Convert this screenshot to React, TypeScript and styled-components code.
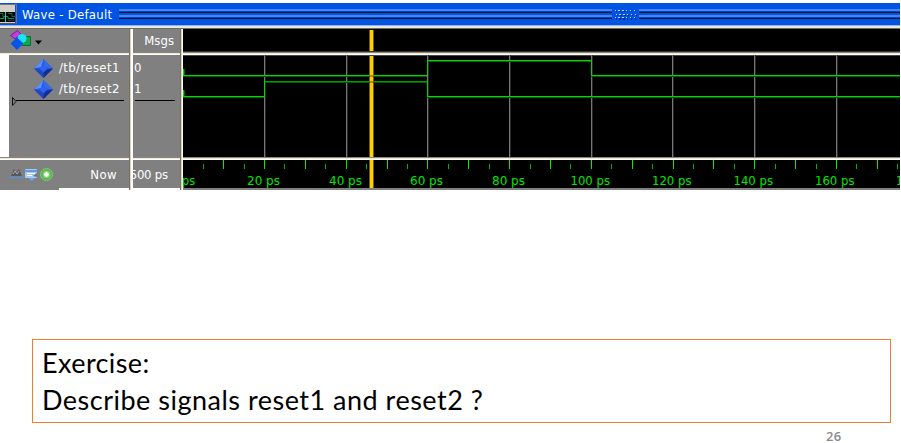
import React from "react";
import styled, { createGlobalStyle } from "styled-components";

const GlobalStyle = createGlobalStyle`
  * { box-sizing: border-box; }
  body { margin: 0; background: #fff; overflow: hidden; }
`;

const Slide = styled.main`
  width: 901px;
  height: 443px;
  padding-top: 3px;
  background: #fff;
  display: flex;
  flex-direction: column;
  overflow: hidden;
`;

const WaveWindow = styled.section`
  width: 900px;
  height: 187px;
  display: flex;
  flex-direction: column;
  font: 13px/16px "DejaVu Sans Condensed", "DejaVu Sans", sans-serif;
  font-stretch: condensed;
  color: #fff;
`;

const TitleBar = styled.header`
  height: 22px;
  display: flex;
  background: #0054e3;
`;

const TitleText = styled.h1`
  margin: 0;
  padding: 4px 0 0 5px;
  width: 101px;
  font: inherit;
  letter-spacing: 0.28px;
  white-space: nowrap;
`;

const TitleEdge = styled.div`
  height: 4px;
  background: linear-gradient(#8fb2ec 0 1px, #ece9d8 1px 3px, #6c6a60 3px);
`;

const Columns = styled.div`
  display: flex;
  height: 161px;
`;

const Column = styled.div<{ $width: number }>`
  width: ${(p) => p.$width}px;
  flex: none;
  display: flex;
  flex-direction: column;
  overflow: hidden;
`;

const Splitter = styled.div<{ $width: number }>`
  width: ${(p) => p.$width}px;
  height: 161px;
  flex: none;
  background: linear-gradient(90deg, #77725f 0 1px, #d8d3c3 1px 2px, #fff 2px);
`;

const Rule = styled.div`
  height: 3px;
  flex: none;
  background: linear-gradient(#8b867a 0 1px, #ece9d8 1px 2px, #fff 2px);
`;

const HeaderCell = styled.div`
  height: 23px;
  flex: none;
  display: flex;
  background: #808080;
`;

const MsgsHeader = styled(HeaderCell)`
  padding: 4px 6px 0 0;
  justify-content: flex-end;
`;

const NamesBody = styled.div`
  height: 102px;
  flex: none;
  border-left: 9px solid #fff;
  background: #808080;
`;

const SignalRow = styled.div`
  height: 21px;
  display: flex;
  padding-left: 25px;
  gap: 6px;
  white-space: nowrap;
  line-height: 26px;
  letter-spacing: 0.38px;
  svg { flex: none; margin-top: 4px; }
`;

const MsgsBody = styled.div`
  height: 102px;
  flex: none;
  padding-left: 1px;
  background: #808080;
  line-height: 26px;
`;

const Value = styled.div`
  height: 21px;
`;

const EndLine = styled.div`
  width: 40px;
  height: 1px;
  margin: 3px 0 0 1px;
  background: #000;
`;

const NowCell = styled.div`
  height: 31px;
  flex: none;
  display: flex;
  justify-content: space-between;
  padding: 7px 12px 0 9px;
  letter-spacing: 0.4px;
  background: linear-gradient(#fff, #fff) 59px 28px / 80px 3px no-repeat #808080;
  svg { margin-top: -1px; }
`;

const NowValue = styled.div`
  height: 28px;
  flex: none;
  display: flex;
  justify-content: flex-end;
  padding: 7px 12px 0 0;
  background: #808080;
  white-space: nowrap;
  letter-spacing: -0.2px;
`;

const Chart = styled.svg`
  display: block;
  flex: none;
`;

const TimeLabel = styled.text`
  fill: #00e600;
  font-size: 12px;
`;

const Exercise = styled.section`
  width: 859px;
  height: 85px;
  margin: 149px 0 0 32px;
  padding: 4px 9px;
  border: 1px solid #ed7d31;
  color: #000;
  font: 27px/37px Lato, sans-serif;
`;

const Line = styled.p<{ $spacing: number }>`
  margin: 0;
  letter-spacing: ${(p) => p.$spacing}px;
  white-space: nowrap;
`;

const PageNumber = styled.footer`
  margin: 5px 0 0 826px;
  color: #8b8b8b;
  font: 600 13px/16px "Open Sans", sans-serif;
  letter-spacing: 0.4px;
`;

const WindowIcon = () => (
  <svg width="17" height="22">
    <path d="M0 1.5H16.5V21" fill="none" stroke="#777" />
    <path d="M0 2h15v19H0z" fill="#d4d0c8" />
    <path d="M0 9h15v10H0z" fill="#000" />
    <path d="M0 10.500h3v3h3M8 10.500h4v3h3" fill="none" stroke="#087b36" />
    <path d="M0 15.500h4v-2h4v2h6" fill="none" stroke="#00a344" />
    <path d="M5.500 9v10" stroke="#36c6cf" />
    <path d="M8 17.500h6" stroke="#3b168c" />
    <path d="M0 20.500h16.500" stroke="#555" />
  </svg>
);

const dots = [
  [9.5, 614.5],
  [13.5, 615.5],
  [17, 614.5],
].flatMap(([y, x]) => [0, 1, 2, 3, 4, 5].map((i) => ({ y: y - 3, x: x - 118 + i * 3.8 })));

const Grip = () => (
  <svg width="782" height="22" shapeRendering="crispEdges">
    {[1, 521].map((start, i) =>
      [6, 12].map((y) => (
        <g key={`${i}${y}`}>
          <rect x={start} y={y} width={i ? 261 : 493} height="2" fill="#4886ee" />
          <rect x={start} y={y + 2} width={i ? 261 : 493} height="1" fill="#0348c2" />
          <rect x={start} y={y + 3} width={i ? 261 : 493} height="1" fill="#001238" />
        </g>
      ))
    )}
    {dots.map((d, i) => (
      <g key={i}>
        <rect x={d.x + 1} y={d.y + 1} width="1.500" height="1.500" fill="#002a7c" />
        <rect x={d.x} y={d.y} width="1.400" height="1.400" fill="#b9d6ff" />
      </g>
    ))}
  </svg>
);

const ShapesIcon = () => (
  <svg width="46" height="23">
    <path d="M22 7.500h8.500v9H22z" fill="#16a34a" stroke="#087332" />
    <path d="M10.500 6.500 17.500 1.500 21 5 15 10z" fill="#c43be0" stroke="#7c1a98" />
    <circle cx="22" cy="9.500" r="4.600" fill="#16e6f4" />
    <path d="M17 8.500 23.500 14.500 17 21 10.500 14.500z" fill="#0754ea" />
    <path d="M35 11.500h7l-3.500 4z" fill="#000" />
  </svg>
);

const Diamond = () => (
  <svg width="19" height="19">
    <path d="M9.500 0 19 9.500 9.500 19 0 9.500z" fill="#2457dd" />
    <path d="M9.500 0 0 9.500 7 8z" fill="#5a91fa" />
    <path d="M9.500 0 19 9.500 10 8z" fill="#356be9" />
    <path d="M0 9.500 9.500 19V11z" fill="#2147c0" />
    <path d="M19 9.500 9.500 19V11z" fill="#142e8c" />
    <path d="M9.500 5.500 13.500 9.500 9.500 13.500 5.500 9.500z" fill="#2c61f2" />
  </svg>
);

const EndMarker = () => (
  <Chart width="120" height="9">
    <path d="M3.500.5v8L7 4.500z" fill="#808080" stroke="#111" />
    <path d="M7 3.500h108" stroke="#000" />
  </Chart>
);

const NowIcons = () => (
  <svg width="46" height="18">
    <path d="M2 10 5 3l2 3 3-3 3 7z" fill="#55595d" />
    <path d="M4 8 6 5l2 3 2-3" fill="none" stroke="#a9aaac" />
    <path d="M2 11.500h11M3 10l-1.500 1.500L3 13M12 10l1.500 1.500L12 13" fill="none" stroke="#4e91df" />
    <rect x="16" y="3" width="12" height="9" rx="1" fill="#a9c9f5" />
    <path d="M16 4h12v2H16z" fill="#629bea" />
    <path d="M18 7.500h8M18 9.500h5" stroke="#fff" />
    <path d="M19 12h7l-3 3z" fill="#69a6f2" />
    <path d="m24 10 4-3v4z" fill="#777" />
    <circle cx="37.500" cy="8.500" r="6" fill="#54b948" stroke="#83c779" />
    <circle cx="37.500" cy="8.500" r="3.800" fill="#8bd47a" />
    <path d="M35 8.500h5M37.500 6v5" stroke="#fff" strokeWidth="2" />
  </svg>
);

const grid = [81, 163, 244, 326, 408, 489, 571, 653];
const ticks = Array.from({ length: 35 }, (_, i) => ({
  x: Math.floor(81.5 + (i - 3) * 20.43),
  major: i % 2 === 1,
}));

const Cursor = ({ top, height }: { top: number; height: number }) => (
  <>
    <rect x="186" y={top} width="5" height={height} fill="#705d00" />
    <rect x="187" y={top} width="3" height={height} fill="#ffcf00" />
  </>
);

const Waveforms = () => (
  <Chart width="717" height="102" shapeRendering="crispEdges">
    <rect width="717" height="102" fill="#000" />
    <rect width="717" height="1" fill="#444" />
    {grid.map((x) => (
      <g key={x}>
        <rect x={x} width="1" height="102" fill="#777" />
        <rect x={x + 1} width="1" height="102" fill="#282828" />
      </g>
    ))}
    <Cursor top={1} height={101} />
    <g fill="none" stroke="#005d00">
      <path d="M1.500 14v7M0 21.500H244M245 6.500H408M408 21.500H717" />
      <path d="M1.500 35v7M0 42.500H81M82 27.500H244M244 42.500H717" />
    </g>
    <g fill="none" stroke="#00d800">
      <path d="M.5 14V20.500H244.500V5.500H408.500V20.500H717" />
      <path d="M.5 35V41.500H81.500V26.500H244.500V41.500H717" />
    </g>
    <path d="M82 26.500H244" stroke="#00a000" />
    <path d="M187 20.500h3M187 26.500h3" stroke="#ff6500" strokeWidth="2" />
  </Chart>
);

const Timeline = () => (
  <Chart width="717" height="30">
    <rect width="717" height="30" fill="#000" />
    {ticks.map((t) => (
      <rect
        key={t.x}
        x={t.x}
        y={t.major ? 0 : 4}
        width="1"
        height={t.major ? 9 : 5}
        fill={t.major ? "#00ee00" : "#00b600"}
      />
    ))}
    <Cursor top={0} height={28} />
    <TimeLabel x="-1" y="25" textLength="13" lengthAdjust="spacingAndGlyphs">ps</TimeLabel>
    {[64, 146, 227, 309, 387.500, 469, 550.500, 632].map((x, i) => (
      <TimeLabel key={x} x={x} y="25" textLength={i < 4 ? 33 : 39.5} lengthAdjust="spacingAndGlyphs">
        {`${(i + 1) * 20} ps`}
      </TimeLabel>
    ))}
    <TimeLabel x="713" y="25">1</TimeLabel>
    <rect y="28" width="717" height="2" fill="#808080" />
  </Chart>
);

export default function App() {
  return (
    <Slide>
      <GlobalStyle />
      <WaveWindow>
        <TitleBar>
          <WindowIcon />
          <TitleText>Wave - Default</TitleText>
          <Grip />
        </TitleBar>
        <TitleEdge />
        <Columns>
          <Column $width={129}>
            <HeaderCell>
              <ShapesIcon />
            </HeaderCell>
            <Rule />
            <NamesBody>
              {["/tb/reset1", "/tb/reset2"].map((name) => (
                <SignalRow key={name}>
                  <Diamond />
                  {name}
                </SignalRow>
              ))}
              <EndMarker />
            </NamesBody>
            <Rule />
            <NowCell>
              <NowIcons />
              <span>Now</span>
            </NowCell>
          </Column>
          <Splitter $width={4} />
          <Column $width={47}>
            <MsgsHeader>Msgs</MsgsHeader>
            <Rule />
            <MsgsBody>
              <Value>0</Value>
              <Value>1</Value>
              <EndLine />
            </MsgsBody>
            <Rule />
            <NowValue>500 ps</NowValue>
          </Column>
          <Splitter $width={3} />
          <Column $width={717}>
            <Chart width="717" height="23" shapeRendering="crispEdges">
              <rect width="717" height="23" fill="#000" />
              <Cursor top={1} height={21} />
              <rect y="22" width="717" height="1" fill="#333" />
            </Chart>
            <Rule />
            <Waveforms />
            <Rule />
            <Timeline />
          </Column>
        </Columns>
      </WaveWindow>
      <Exercise>
        <Line $spacing={0.4}>Exercise:</Line>
        <Line $spacing={0.5}>Describe signals reset1 and reset2 ?</Line>
      </Exercise>
      <PageNumber>26</PageNumber>
    </Slide>
  );
}
